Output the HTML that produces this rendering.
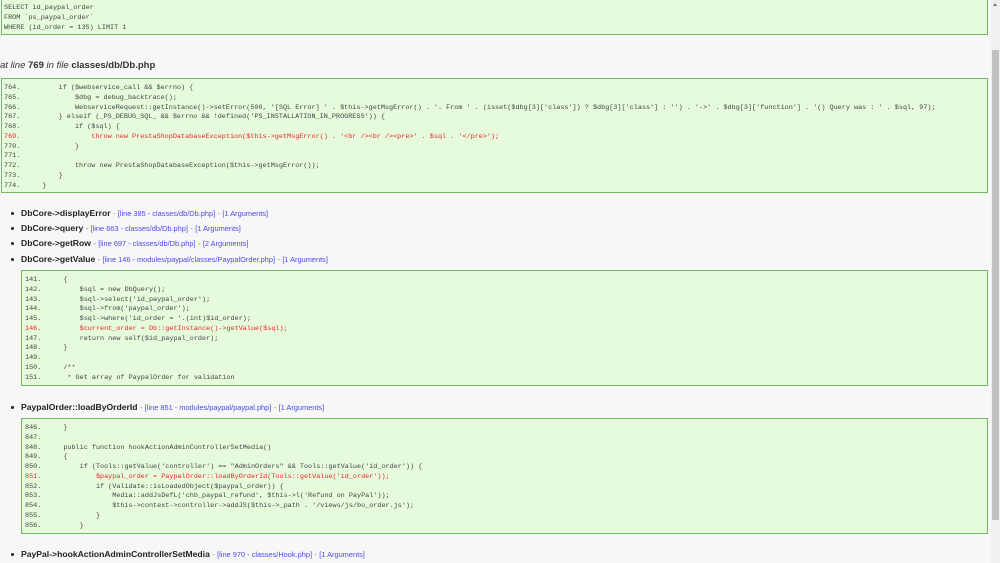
<!DOCTYPE html>
<html><head><meta charset="utf-8"><style>
html,body{margin:0;padding:0;background:#f7f7f7;width:1000px;height:563px;overflow:hidden;position:relative;font-family:"Liberation Sans",sans-serif}
.box{position:absolute;background:#e6fadc;border:1px solid #79b46a;box-sizing:border-box}
pre{margin:0;font-family:"Liberation Mono",monospace;font-size:6.8px;line-height:9.75px;color:#444;white-space:pre}
.n{display:inline-block;width:22px}
.r{color:#e8262a}
.h{position:absolute;font-size:8.6px;color:#222}
.h b{font-weight:bold}
.h a{color:#4a4ae8;font-size:7.4px;text-decoration:none}
.h .s{color:#777;font-size:7.4px}
.bul{position:absolute;width:3px;height:3px;border-radius:50%;background:#222}
.sb{position:absolute;left:991px;top:0;width:9px;height:563px;background:#f0f0f0}
.th{position:absolute;left:992px;top:50px;width:7px;height:470px;background:#c1c1c1}
</style></head><body>
<div class="box" style="left:1px;top:-2px;width:987px;height:37px;padding:5px 0 0 2px"><pre>SELECT id_paypal_order
FROM `ps_paypal_order`
WHERE (id_order = 135) LIMIT 1</pre></div>

<div class="h" style="left:0;top:60px;font-size:9.5px;color:#333"><i>at line</i> <b>769</b> <i>in file</i> <b>classes/db/Db.php</b></div>

<div class="box" style="left:1px;top:78px;width:987px;height:115px;padding:5px 0 0 2px"><pre><span class="n">764.</span>        if ($webservice_call &amp;&amp; $errno) {
<span class="n">765.</span>            $dbg = debug_backtrace();
<span class="n">766.</span>            WebserviceRequest::getInstance()-&gt;setError(500, '[SQL Error] ' . $this-&gt;getMsgError() . '. From ' . (isset($dbg[3]['class']) ? $dbg[3]['class'] : '') . '-&gt;' . $dbg[3]['function'] . '() Query was : ' . $sql, 97);
<span class="n">767.</span>        } elseif (_PS_DEBUG_SQL_ &amp;&amp; $errno &amp;&amp; !defined('PS_INSTALLATION_IN_PROGRESS')) {
<span class="n">768.</span>            if ($sql) {
<span class="r"><span class="n">769.</span>                throw new PrestaShopDatabaseException($this-&gt;getMsgError() . '&lt;br /&gt;&lt;br /&gt;&lt;pre&gt;' . $sql . '&lt;/pre&gt;');</span>
<span class="n">770.</span>            }
<span class="n">771.</span>
<span class="n">772.</span>            throw new PrestaShopDatabaseException($this-&gt;getMsgError());
<span class="n">773.</span>        }
<span class="n">774.</span>    }</pre></div>

<div class="bul" style="left:11px;top:212px"></div>
<div class="h" style="left:21px;top:208px"><b>DbCore-&gt;displayError</b> <span class="s">-</span> <a>[line 385 - classes/db/Db.php]</a> <span class="s">-</span> <a>[1 Arguments]</a></div>
<div class="bul" style="left:11px;top:227px"></div>
<div class="h" style="left:21px;top:223px"><b>DbCore-&gt;query</b> <span class="s">-</span> <a>[line 663 - classes/db/Db.php]</a> <span class="s">-</span> <a>[1 Arguments]</a></div>
<div class="bul" style="left:11px;top:242px"></div>
<div class="h" style="left:21px;top:238px"><b>DbCore-&gt;getRow</b> <span class="s">-</span> <a>[line 697 - classes/db/Db.php]</a> <span class="s">-</span> <a>[2 Arguments]</a></div>
<div class="bul" style="left:11px;top:258px"></div>
<div class="h" style="left:21px;top:254px"><b>DbCore-&gt;getValue</b> <span class="s">-</span> <a>[line 146 - modules/paypal/classes/PaypalOrder.php]</a> <span class="s">-</span> <a>[1 Arguments]</a></div>

<div class="box" style="left:21px;top:270px;width:967px;height:116px;padding:5px 0 0 3px"><pre><span class="n">141.</span>    {
<span class="n">142.</span>        $sql = new DbQuery();
<span class="n">143.</span>        $sql-&gt;select('id_paypal_order');
<span class="n">144.</span>        $sql-&gt;from('paypal_order');
<span class="n">145.</span>        $sql-&gt;where('id_order = '.(int)$id_order);
<span class="r"><span class="n">146.</span>        $current_order = Db::getInstance()-&gt;getValue($sql);</span>
<span class="n">147.</span>        return new self($id_paypal_order);
<span class="n">148.</span>    }
<span class="n">149.</span>
<span class="n">150.</span>    /**
<span class="n">151.</span>     * Get array of PaypalOrder for validation</pre></div>

<div class="bul" style="left:11px;top:406px"></div>
<div class="h" style="left:21px;top:402px"><b>PaypalOrder::loadByOrderId</b> <span class="s">-</span> <a>[line 851 - modules/paypal/paypal.php]</a> <span class="s">-</span> <a>[1 Arguments]</a></div>

<div class="box" style="left:21px;top:418px;width:967px;height:116px;padding:5px 0 0 3px"><pre><span class="n">846.</span>    }
<span class="n">847.</span>
<span class="n">848.</span>    public function hookActionAdminControllerSetMedia()
<span class="n">849.</span>    {
<span class="n">850.</span>        if (Tools::getValue('controller') == "AdminOrders" &amp;&amp; Tools::getValue('id_order')) {
<span class="r"><span class="n">851.</span>            $paypal_order = PaypalOrder::loadByOrderId(Tools::getValue('id_order'));</span>
<span class="n">852.</span>            if (Validate::isLoadedObject($paypal_order)) {
<span class="n">853.</span>                Media::addJsDefL('chb_paypal_refund', $this-&gt;l('Refund on PayPal'));
<span class="n">854.</span>                $this-&gt;context-&gt;controller-&gt;addJS($this-&gt;_path . '/views/js/bo_order.js');
<span class="n">855.</span>            }
<span class="n">856.</span>        }</pre></div>

<div class="bul" style="left:11px;top:553px"></div>
<div class="h" style="left:21px;top:549px"><b>PayPal-&gt;hookActionAdminControllerSetMedia</b> <span class="s">-</span> <a>[line 970 - classes/Hook.php]</a> <span class="s">-</span> <a>[1 Arguments]</a></div>

<div class="sb"></div><div class="th"></div>
<div style="position:absolute;left:993px;top:3px;width:0;height:0;border-left:2px solid transparent;border-right:2px solid transparent;border-bottom:3px solid #777"></div>
</body></html>
